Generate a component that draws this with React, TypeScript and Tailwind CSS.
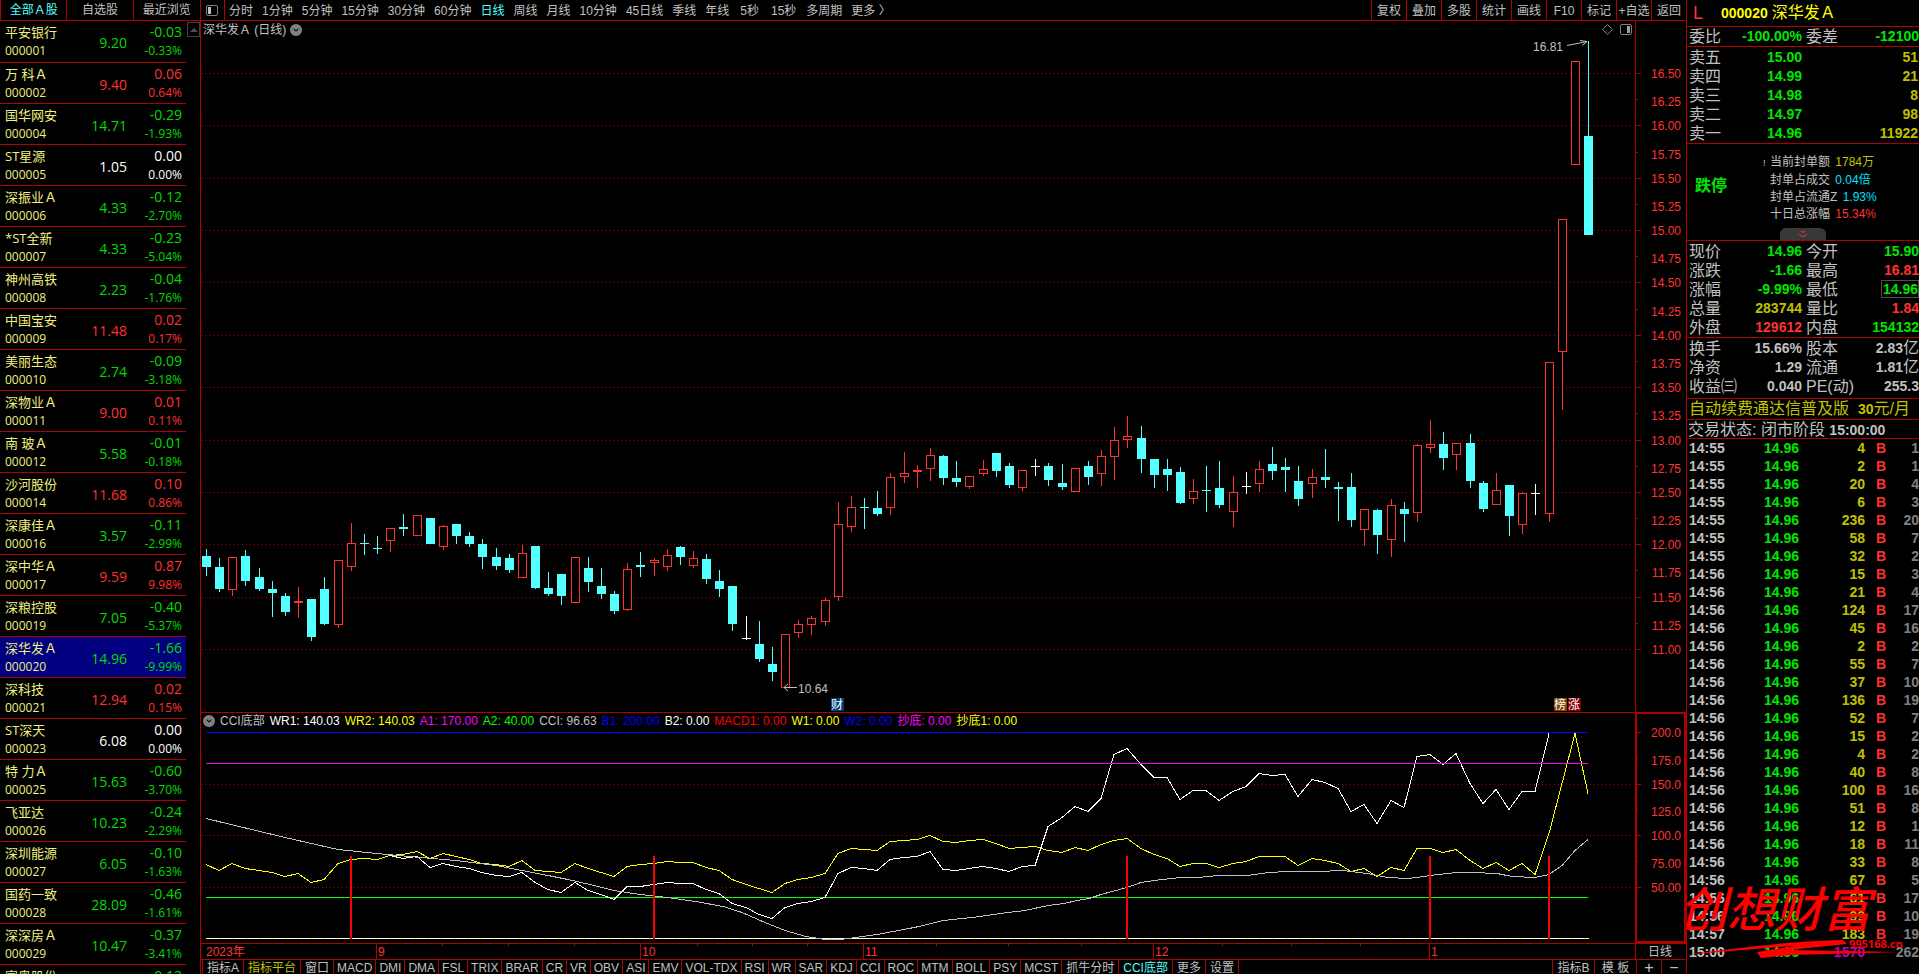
import { FaChevronDown } from 'react-icons/fa'

const stocks: [string, string, string, string, string][] = [
  ['平安银行', '000001', '9.20', '-0.03', '-0.33%'],
  ['万 科Ａ', '000002', '9.40', '0.06', '0.64%'],
  ['国华网安', '000004', '14.71', '-0.29', '-1.93%'],
  ['ST星源', '000005', '1.05', '0.00', '0.00%'],
  ['深振业Ａ', '000006', '4.33', '-0.12', '-2.70%'],
  ['*ST全新', '000007', '4.33', '-0.23', '-5.04%'],
  ['神州高铁', '000008', '2.23', '-0.04', '-1.76%'],
  ['中国宝安', '000009', '11.48', '0.02', '0.17%'],
  ['美丽生态', '000010', '2.74', '-0.09', '-3.18%'],
  ['深物业Ａ', '000011', '9.00', '0.01', '0.11%'],
  ['南 玻Ａ', '000012', '5.58', '-0.01', '-0.18%'],
  ['沙河股份', '000014', '11.68', '0.10', '0.86%'],
  ['深康佳Ａ', '000016', '3.57', '-0.11', '-2.99%'],
  ['深中华Ａ', '000017', '9.59', '0.87', '9.98%'],
  ['深粮控股', '000019', '7.05', '-0.40', '-5.37%'],
  ['深华发Ａ', '000020', '14.96', '-1.66', '-9.99%'],
  ['深科技', '000021', '12.94', '0.02', '0.15%'],
  ['ST深天', '000023', '6.08', '0.00', '0.00%'],
  ['特 力Ａ', '000025', '15.63', '-0.60', '-3.70%'],
  ['飞亚达', '000026', '10.23', '-0.24', '-2.29%'],
  ['深圳能源', '000027', '6.05', '-0.10', '-1.63%'],
  ['国药一致', '000028', '28.09', '-0.46', '-1.61%'],
  ['深深房Ａ', '000029', '10.47', '-0.37', '-3.41%'],
  ['富奥股份', '000030', '5.28', '-0.12', '-2.22%'],
]

const periods = ['分时', '1分钟', '5分钟', '15分钟', '30分钟', '60分钟', '日线', '周线', '月线', '10分钟', '45日线', '季线', '年线', '5秒', '15秒', '多周期', '更多 〉']
const tools = ['复权', '叠加', '多股', '统计', '画线', 'F10', '标记', '+自选', '返回']
const indicators = ['指标A', '指标平台', '窗口', 'MACD', 'DMI', 'DMA', 'FSL', 'TRIX', 'BRAR', 'CR', 'VR', 'OBV', 'ASI', 'EMV', 'VOL-TDX', 'RSI', 'WR', 'SAR', 'KDJ', 'CCI', 'ROC', 'MTM', 'BOLL', 'PSY', 'MCST', '抓牛分时', 'CCI底部', '更多', '设置']

const legend = [
  ['WR1: 140.03', 'text-white'],
  ['WR2: 140.03', 'text-[#ffff00]'],
  ['A1: 170.00', 'text-[#ff00ff]'],
  ['A2: 40.00', 'text-[#00ff00]'],
  ['CCI: 96.63', 'text-[#c0c0c0]'],
  ['B1: 200.00', 'text-[#0000ff]'],
  ['B2: 0.00', 'text-white'],
  ['MACD1: 0.00', 'text-[#ff0000]'],
  ['W1: 0.00', 'text-[#ffff00]'],
  ['W2: 0.00', 'text-[#0000ff]'],
  ['抄底: 0.00', 'text-[#ff00ff]'],
  ['抄底1: 0.00', 'text-[#ffff00]'],
]

// kind, high, body top, body bottom, low
type Candle = [string, number, number, number, number]
const candles: Candle[] = [
  ['d', 549, 556, 567, 576], ['d', 558, 567, 589, 592], ['u', 557, 557, 590, 596], ['d', 550, 556, 581, 586],
  ['d', 568, 577, 589, 591], ['d', 581, 589, 593, 617], ['d', 593, 596, 612, 616], ['u', 587, 601, 603, 618],
  ['d', 599, 599, 637, 641], ['d', 577, 589, 624, 625], ['u', 560, 560, 625, 628], ['u', 523, 543, 567, 571],
  ['d', 534, 543, 544, 555], ['d', 536, 548, 549, 554], ['u', 528, 528, 541, 552], ['d', 514, 527, 529, 536],
  ['u', 515, 515, 536, 536], ['d', 518, 518, 544, 544], ['u', 525, 526, 547, 550], ['d', 524, 524, 536, 544],
  ['d', 532, 536, 544, 547], ['d', 539, 544, 557, 569], ['d', 548, 557, 566, 570], ['d', 554, 558, 570, 573],
  ['u', 545, 553, 578, 578], ['d', 546, 546, 588, 589], ['d', 572, 588, 594, 596], ['d', 574, 574, 596, 605],
  ['u', 557, 557, 603, 603], ['d', 557, 568, 582, 592], ['d', 568, 586, 594, 599], ['d', 591, 594, 611, 614],
  ['u', 563, 569, 610, 611], ['d', 552, 565, 567, 577], ['u', 558, 560, 563, 576], ['u', 549, 555, 567, 571],
  ['d', 546, 547, 557, 565], ['u', 551, 558, 566, 568], ['d', 554, 559, 579, 584], ['d', 570, 581, 589, 597],
  ['d', 586, 586, 624, 631], ['x', 616, 638, 639, 640], ['d', 621, 644, 659, 662], ['d', 647, 664, 672, 681],
  ['u', 634, 634, 688, 688], ['u', 620, 624, 633, 638], ['u', 616, 618, 625, 635], ['u', 598, 600, 622, 626],
  ['u', 502, 524, 597, 601], ['u', 496, 507, 527, 532], ['d', 498, 507, 508, 529], ['d', 491, 508, 514, 516],
  ['u', 473, 477, 508, 515], ['u', 452, 473, 477, 483], ['u', 465, 470, 472, 488], ['u', 448, 455, 469, 481],
  ['d', 455, 456, 478, 485], ['d', 461, 478, 482, 487], ['u', 476, 476, 487, 489], ['u', 460, 469, 474, 476],
  ['d', 453, 453, 471, 477], ['d', 463, 466, 485, 488], ['u', 470, 470, 488, 491], ['x', 459, 466, 467, 476],
  ['d', 463, 466, 480, 486], ['d', 464, 483, 487, 490], ['u', 468, 468, 492, 492], ['d', 461, 466, 477, 485],
  ['u', 450, 456, 474, 486], ['u', 427, 440, 457, 480], ['u', 416, 436, 440, 448], ['d', 426, 438, 459, 473],
  ['d', 459, 459, 475, 488], ['d', 459, 469, 475, 491], ['d', 467, 472, 503, 504], ['u', 479, 491, 499, 504],
  ['d', 466, 490, 491, 512], ['d', 461, 488, 505, 508], ['u', 476, 492, 512, 527], ['x', 472, 486, 487, 494],
  ['u', 461, 469, 484, 492], ['d', 447, 464, 471, 480], ['d', 458, 467, 470, 492], ['d', 466, 481, 499, 506],
  ['u', 469, 477, 484, 498], ['d', 449, 477, 480, 488], ['d', 482, 487, 489, 521], ['d', 473, 487, 520, 527],
  ['u', 509, 509, 530, 546], ['d', 509, 510, 535, 554], ['u', 499, 505, 540, 557], ['d', 502, 509, 514, 542],
  ['u', 444, 445, 513, 522], ['u', 420, 444, 448, 453], ['d', 432, 444, 458, 470], ['u', 443, 443, 455, 470],
  ['d', 434, 443, 481, 488], ['d', 481, 483, 509, 512], ['u', 473, 490, 505, 505], ['d', 485, 485, 516, 536],
  ['u', 492, 493, 525, 534], ['x', 484, 493, 494, 515], ['u', 362, 362, 514, 522], ['u', 219, 219, 352, 410],
  ['u', 61, 61, 165, 165], ['d', 41, 136, 235, 235],
]

const wr2 = [
  864, 870, 863, 868, 870, 872, 876, 873, 882, 879, 863, 859, 858, 859, 855, 854, 851, 858, 853, 856,
  859, 863, 864, 866, 860, 870, 871, 872, 863, 868, 872, 876, 866, 864, 863, 861, 862, 862, 867, 870,
  879, 884, 888, 892, 883, 879, 877, 873, 853, 848, 849, 850, 841, 840, 839, 835, 841, 842, 840, 839,
  843, 848, 847, 846, 850, 852, 847, 850, 844, 840, 838, 848, 854, 858, 866, 863, 863, 867, 863, 861,
  856, 856, 856, 865, 858, 860, 863, 871, 868, 876, 867, 870, 848, 848, 852, 849, 860, 868, 862, 870,
  863, 874, 833, 783, 733, 793,
]

// starts at the 15th bar
const wr1 = [
  855, 858, 856, 867, 863, 866, 868, 872, 875, 876, 872, 882, 889, 892, 882, 890, 894, 899, 886, 886,
  884, 882, 883, 883, 889, 893, 903, 907, 914, 918, 907, 903, 901, 897, 873, 867, 868, 870, 859, 857,
  856, 851, 869, 870, 868, 866, 868, 871, 866, 865, 826, 817, 806, 811, 798, 754, 748, 764, 777, 777,
  799, 790, 790, 800, 791, 786, 773, 775, 774, 796, 779, 782, 788, 811, 804, 823, 800, 807, 756, 754,
  764, 753, 783, 803, 789, 809, 791, 791, 733,
]

const cci = [
  [0, 818], [6, 837], [10, 849], [13, 853], [15.4, 856], [19, 860], [22, 865], [24, 870], [26, 875], [27.5, 879],
  [29.2, 884], [31, 890], [33, 894], [35, 897], [37.2, 901], [39.3, 906], [40.7, 912], [42.5, 922], [44, 930], [45.6, 936],
  [47, 939], [48.2, 939], [49.4, 937], [51, 934], [53, 929], [54.2, 926], [56, 920], [58.2, 917], [60.9, 912], [62.2, 910],
  [64, 905], [65.2, 903], [66.2, 900], [67.1, 898], [68, 894], [70, 887], [71, 882], [72, 880], [74, 877], [75.4, 877],
  [76.9, 875], [79.2, 875], [80.7, 872], [82.2, 871], [84.5, 871], [86.4, 870], [88.2, 873], [89.8, 877], [91.3, 878], [92, 877],
  [93, 875], [95, 872], [96.2, 872], [98.1, 873], [99.2, 876], [101, 877], [102, 874], [103, 865], [104, 850], [105, 839],
]

const ticks: [string, string, string][] = [
  ['14:55', '4', '1'], ['14:55', '2', '1'], ['14:55', '20', '4'], ['14:55', '6', '3'], ['14:55', '236', '20'],
  ['14:55', '58', '7'], ['14:55', '32', '2'], ['14:56', '15', '3'], ['14:56', '21', '4'], ['14:56', '124', '17'],
  ['14:56', '45', '16'], ['14:56', '2', '2'], ['14:56', '55', '7'], ['14:56', '37', '10'], ['14:56', '136', '19'],
  ['14:56', '52', '7'], ['14:56', '15', '2'], ['14:56', '4', '2'], ['14:56', '40', '8'], ['14:56', '100', '16'],
  ['14:56', '51', '8'], ['14:56', '12', '1'], ['14:56', '18', '11'], ['14:56', '33', '8'], ['14:56', '67', '5'],
  ['14:56', '61', '17'], ['14:56', '99', '10'], ['14:57', '183', '19'], ['15:00', '1570', '262'],
]

const asks = [['卖五', '15.00', '51'], ['卖四', '14.99', '21'], ['卖三', '14.98', '8'], ['卖二', '14.97', '98'], ['卖一', '14.96', '11922']]

const G = 'text-[#00e600]'
const R = 'text-[#ff3232]'
const Y = 'text-[#c0c000]'
const W = 'text-[#c0c0c0]'

const quotes = [
  ['现价', '14.96', G, '今开', '15.90', G],
  ['涨跌', '-1.66', G, '最高', '16.81', R],
  ['涨幅', '-9.99%', G, '最低', '14.96', G],
  ['总量', '283744', Y, '量比', '1.84', R],
  ['外盘', '129612', R, '内盘', '154132', G],
]
const finance = [
  ['换手', '15.66%', W, '股本', '2.83亿', W],
  ['净资', '1.29', W, '流通', '1.81亿', W],
  ['收益㈢', '0.040', W, 'PE(动)', '255.3', W],
]

const barX = (i: number) => Math.round(206 + i * 13.162)
const priceY = (p: number) => Math.round(73 + (16.5 - p) * 104.73)
const cciY = (v: number) => Math.round(938 - v * 1.03)

function tone(v: string) {
  if (v.startsWith('-')) return 'text-[#00dc00]'
  return parseFloat(v) === 0 ? 'text-white' : 'text-[#ff3030]'
}

function PriceChart() {
  const labels = Array.from({ length: 23 }, (_, i) => 16.5 - i * 0.25)
  return (
    <svg viewBox="201 39 1485 673" className="block w-full flex-1 min-h-0" role="img" aria-label="日线">
      <g shapeRendering="crispEdges">
        {labels.filter(p => p % 0.5 === 0).map(p => (
          <line key={p} x1="202" x2="1632" y1={priceY(p) + 0.5} y2={priceY(p) + 0.5} stroke="#b00000" strokeDasharray="1 3" />
        ))}
        <line x1="1635.5" x2="1635.5" y1="39" y2="712" stroke="#b00000" />
        {labels.map(p => (
          <line key={p} x1="1636" x2={p % 0.5 === 0 ? 1641 : 1638} y1={priceY(p) + 0.5} y2={priceY(p) + 0.5} stroke="#b00000" />
        ))}
        {candles.map(([kind, high, top, bottom, low], i) => {
          const x = barX(i)
          const color = kind === 'd' ? '#54ffff' : kind === 'u' ? '#ff3232' : '#ffffff'
          return (
            <g key={i}>
              <rect x={x} y={high} width="1" height={low - high} fill={color} />
              {kind === 'u'
                ? <rect x={x - 3.5} y={top + 0.5} width="8" height={Math.max(bottom - top - 1, 1)} fill="#000" stroke={color} />
                : <rect x={x - 4} y={top} width="9" height={bottom - top} fill={color} />}
            </g>
          )
        })}
      </g>
      <g fontSize="12" fontFamily="Liberation Sans, sans-serif">
        {labels.map(p => (
          <text key={p} x="1681" y={priceY(p) + (p % 0.5 === 0 ? 5 : 7)} textAnchor="end" fill="#ff3232">{p.toFixed(2)}</text>
        ))}
        <text x="1563" y="51" textAnchor="end" fill="#c0c0c0">16.81</text>
        <text x="798" y="693" fill="#c0c0c0">10.64</text>
      </g>
      <g stroke="#c0c0c0" fill="none">
        <path d="M1567 45.5 L1587 41.5 M1580 40.5 L1587 41.5 L1582 45.5" />
        <path d="M784 687.5 H797 M788 684 L784 687.5 L788 691" />
      </g>
      <g fontSize="12" fill="#fff" fontFamily="Noto Sans CJK SC, sans-serif">
        <rect x="831" y="698" width="13" height="13" fill="#003c78" />
        <text x="831" y="709">财</text>
        <rect x="1554" y="698" width="13" height="13" fill="#804000" />
        <text x="1554" y="709">榜</text>
        <rect x="1568" y="698" width="13" height="13" fill="#800000" />
        <text x="1568" y="709">涨</text>
      </g>
    </svg>
  )
}

function CciChart() {
  const labels = [200, 175, 150, 125, 100, 75, 50]
  return (
    <svg viewBox="201 728 1485 215" className="block w-full shrink-0" role="img" aria-label="CCI底部">
      <g shapeRendering="crispEdges" fill="none">
        {[150, 100, 50].map(v => (
          <line key={v} x1="202" x2="1632" y1={cciY(v) + 0.5} y2={cciY(v) + 0.5} stroke="#b00000" strokeDasharray="1 3" />
        ))}
        {labels.map(v => (
          <line key={v} x1="1636" x2={v % 50 === 0 ? 1641 : 1638} y1={cciY(v) + 0.5} y2={cciY(v) + 0.5} stroke="#b00000" />
        ))}
        <path d="M1636 728 V942 H1685 V728" stroke="#b00000" strokeWidth="2" />
        <path d="M206 938.5 H1589" stroke="#fff" />
        <path d="M206 938.5 H1589" stroke="#ffff00" strokeDasharray="3 10" />
        <path d="M206 897.5 H1588" stroke="#00ff00" />
        <polyline points={wr2.map((y, i) => `${barX(i)},${y}.5`).join(' ')} stroke="#ffff00" />
        <polyline points={wr1.map((y, i) => `${barX(i + 14)},${y}.5`).join(' ')} stroke="#fff" />
        <polyline points={cci.map(([i, y]) => `${barX(i)},${y}.5`).join(' ')} stroke="#c0c0c0" />
        <path d="M206 763.5 H1588" stroke="#ff00ff" />
        <path d="M206 732.5 H1588" stroke="#0000ff" />
        {[11, 34, 70, 93, 102].map(i => (
          <rect key={i} x={barX(i) - 1} y="856" width="2" height="83" fill="#ff0000" />
        ))}
      </g>
      <g fontSize="12" fill="#ff3232" textAnchor="end" fontFamily="Liberation Sans, sans-serif">
        {labels.map(v => (
          <text key={v} x="1681" y={cciY(v) + (v % 50 === 0 ? 5 : 7)}>{v < 100 ? v.toFixed(2) : v.toFixed(1)}</text>
        ))}
      </g>
    </svg>
  )
}

function TimeAxis() {
  const months: [number, string][] = [[376, '9'], [640, '10'], [863, '11'], [1153, '12'], [1429, '1']]
  return (
    <svg viewBox="201 944 1485 15" className="block w-full shrink-0" role="img" aria-label="时间轴">
      <g stroke="#b00000" shapeRendering="crispEdges">
        {months.map(([x]) => <line key={x} x1={x + 0.5} x2={x + 0.5} y1="944" y2="959" />)}
        {[442, 508, 574, 697, 752, 807, 936, 1008, 1081, 1222, 1291, 1360].map(x => (
          <line key={x} x1={x + 0.5} x2={x + 0.5} y1="944" y2="946" />
        ))}
        <line x1="1635.5" x2="1635.5" y1="944" y2="959" />
      </g>
      <g fontSize="12" fill="#ff3232" fontFamily="Liberation Sans, Noto Sans CJK SC, sans-serif">
        <text x="206" y="956">2023年</text>
        {months.map(([x, m]) => <text key={x} x={x + 2} y="956">{m}</text>)}
        <text x="1648" y="956" fill="#c0c0c0">日线</text>
      </g>
    </svg>
  )
}

function Chevron() {
  return (
    <span className="flex size-3 items-center justify-center rounded-full bg-[#808080] text-black">
      <FaChevronDown size={6} />
    </span>
  )
}

function QuoteTable({ rows }: { rows: string[][] }) {
  return (
    <table className="w-full table-fixed border-collapse">
      <tbody>
        {rows.map(([a, av, ac, b, bv, bc]) => (
          <tr key={a} className="h-[19px] leading-[19px]">
            <th className="w-[48px] p-0 pl-0.5 text-left font-normal whitespace-nowrap">{a}</th>
            <td className={`w-[67px] p-0 text-right text-sm leading-[19px] font-bold ${ac}`}>{av}</td>
            <th className="w-[48px] p-0 pl-1 text-left font-normal whitespace-nowrap">{b}</th>
            <td className={`p-0 text-right text-sm leading-[19px] font-bold ${bc}`}>
              {b === '最低'
                ? <span className="inline-block h-[18px] border border-[#505050] pl-px leading-4">{bv}</span>
                : bv.replace('亿', '')}
              {bv.endsWith('亿') && <span className="text-base leading-none font-normal">亿</span>}
            </td>
          </tr>
        ))}
      </tbody>
    </table>
  )
}

function Watermark() {
  return (
    <div className="absolute -left-2 bottom-3 w-[224px] text-[#ff0000]">
      <div className="font-['Noto_Sans_CJK_SC',sans-serif] text-5xl leading-[64px] font-medium italic">创想财富</div>
      <svg viewBox="0 0 224 24" className="block w-full">
        <path d="M3 17 C60 10 110 3 164 2 L168 6 L110 12 L222 14 L112 17 L82 20 L78 14 L116 8 C80 10 40 14 3 17Z" fill="#ff0000" />
        <text x="170" y="10" fontSize="11" fontWeight="700" fontFamily="Open Sans, sans-serif" fill="#ff0000">995168.cn</text>
      </svg>
    </div>
  )
}

export default function App() {
  return (
    <main className="grid h-screen grid-cols-[201px_minmax(0,1fr)_233px] overflow-hidden bg-black font-['Liberation_Sans','Noto_Sans_CJK_SC',sans-serif] text-xs text-[#c0c0c0]">
      <aside className="min-h-0 overflow-hidden border-r border-[#b00000]">
        <nav className="grid h-[21px] grid-cols-3 border-b border-l border-[#b00000] leading-5">
          <button className="border-r border-[#b00000] text-[#54ffff]">全部Ａ股</button>
          <button className="border-r border-[#b00000]">自选股</button>
          <button>最近浏览</button>
        </nav>
        <div className="flex items-start">
          <table className="w-[186px] table-fixed border-collapse font-['Open_Sans','Noto_Sans_CJK_SC',sans-serif]">
            <tbody>
              {stocks.map(([name, code, price, diff, pct]) => (
                <tr key={code} className={code === '000020' ? 'bg-[#000080]' : ''}>
                  <td className="h-[41px] border-b border-[#b00000] p-0 pl-[5px] text-[#f0f080]">
                    <div className="pb-0.5 text-[13px] leading-[18px] whitespace-nowrap">{name}</div>
                    <div className="leading-4">{code}</div>
                  </td>
                  <td className={`w-[60px] border-b border-[#b00000] p-0 pt-1 text-right text-sm ${tone(diff)}`}>{price}</td>
                  <td className={`w-[59px] border-b border-[#b00000] p-0 pr-1 text-right ${tone(diff)}`}>
                    <div className="pb-0.5 text-sm leading-[18px]">{diff}</div>
                    <div className="leading-4">{pct}</div>
                  </td>
                </tr>
              ))}
            </tbody>
          </table>
          <button aria-label="向上" className="mt-px ml-px flex h-[15px] w-[13px] items-center justify-center border border-[#404040] text-[#505050]">
            <svg viewBox="0 0 8 4" className="w-2"><path d="M0 4 L4 0 L8 4Z" fill="currentColor" /></svg>
          </button>
        </div>
      </aside>

      <section className="flex min-h-0 min-w-0 flex-col">
        <header className="flex h-[21px] shrink-0 justify-between border-b border-[#b00000] leading-4">
          <div className="flex">
            <button aria-label="侧栏" className="flex w-6 items-center justify-center border-r border-[#b00000] pr-0.5">
              <svg viewBox="0 0 12 11" className="w-3" fill="none" stroke="#808080">
                <rect x="0.5" y="0.5" width="11" height="10" rx="1.5" />
                <rect x="2" y="2" width="3" height="7" fill="#c0c0c0" stroke="none" />
              </svg>
            </button>
            {periods.map(p => (
              <button key={p} className={`pt-0.5 whitespace-nowrap ${p.endsWith('秒') ? 'px-1.5' : 'pr-[5px] pl-1'} ${p === '日线' ? 'text-[#54ffff]' : ''}`}>{p}</button>
            ))}
          </div>
          <div className="flex">
            {tools.map(t => (
              <button key={t} className="w-[35px] border-l border-[#b00000] pt-0.5 whitespace-nowrap">{t}</button>
            ))}
          </div>
        </header>

        <div className="flex h-[18px] shrink-0 items-center">
          <div className="flex flex-1 items-center gap-1 pl-0.5 leading-[18px]">
            深华发Ａ (日线) <Chevron />
          </div>
          <svg viewBox="0 0 32 12" className="mr-px h-3 w-8" fill="none" stroke="#808080">
            <path d="M5.5 0.5 L10.5 5.5 L5.5 10.5 L0.5 5.5Z" />
            <rect x="18.5" y="0.5" width="11" height="10" rx="1.5" />
            <rect x="25" y="2" width="3" height="7" fill="#a0a0a0" stroke="none" />
          </svg>
          <div className="h-full w-[51px] border-l border-[#b00000]" />
        </div>
        <PriceChart />
        <div className="flex h-4 shrink-0 border-t border-[#b00000] leading-[15px]">
          <div className="flex flex-1 items-center gap-[5px] pt-px pl-0.5 whitespace-nowrap">
            <Chevron />
            <span>CCI底部</span>
            {legend.map(([text, color]) => <span key={text} className={color}>{text}</span>)}
          </div>
          <div className="w-[51px] border-2 border-b-0 border-t-1 border-[#b00000]" />
        </div>
        <CciChart />
        <div className="shrink-0 border-y border-[#b00000]"><TimeAxis /></div>
        <footer className="flex h-[14px] shrink-0 justify-between overflow-hidden pl-px leading-4">
          <div className="flex">
            {indicators.map(t => (
              <button key={t} className={`h-4 border-l border-[#b00000] whitespace-nowrap last:border-r ${/^[A-Z-]+$/.test(t) ? 'px-[3px]' : 'px-1'} ${t === '指标平台' ? 'text-[#c0c000]' : t === 'CCI底部' ? 'text-[#54ffff]' : ''}`}>{t}</button>
            ))}
          </div>
          <div className="flex">
            <button className="h-4 w-[42px] border-l border-[#b00000]">指标B</button>
            <button className="h-4 w-[42px] border-l border-[#b00000]">模 板</button>
            <button className="h-4 w-[25px] border-l border-[#b00000] text-base leading-4">+</button>
            <button className="h-4 w-[25px] border-l border-[#b00000] text-base leading-4">−</button>
          </div>
        </footer>
      </section>

      <aside className="relative min-h-0 overflow-hidden border-l border-[#b00000] text-base">
        <h1 className="flex h-[27px] items-center border-b border-[#b00000] pl-1.5 text-[#ffff00]">
          <span className="w-7 text-lg text-[#ff3232]">L</span>
          <b className="text-sm">000020</b><span className="pl-1">深华发Ａ</span>
        </h1>
        <div className="border-b border-[#b00000]">
          <QuoteTable rows={[['委比', '-100.00%', G, '委差', '-12100', G]]} />
        </div>
        <div className="pt-px">
          <table className="w-full table-fixed border-collapse">
            <tbody>
              {asks.map(([label, price, vol]) => (
                <tr key={label} className="h-[19px] leading-[19px]">
                  <th className="w-[48px] p-0 pl-0.5 text-left font-normal">{label}</th>
                  <td className="w-[67px] p-0 text-right text-sm leading-[19px] font-bold text-[#00e600]">{price}</td>
                  <td className="p-0 pr-px text-right text-sm leading-[19px] font-bold text-[#c0c000]">{vol}</td>
                </tr>
              ))}
            </tbody>
          </table>
        </div>
        <div className="relative flex h-[98px] items-center border-y border-[#b00000] pb-2">
          <b className="w-[76px] pb-1 pl-2 text-base text-[#00e600]">跌停</b>
          <ul className="text-xs leading-[17px]">
            <li><span className="inline-block w-[7px] text-[9px]">!</span>当前封单额 <span className="pl-0.5 text-[#c0c000]">1784万</span></li>
            <li className="pl-[7px]">封单占成交 <span className="pl-0.5 text-[#00e0ff]">0.04倍</span></li>
            <li className="pl-[7px]">封单占流通Z <span className="pl-0.5 text-[#00e0ff]">1.93%</span></li>
            <li className="pl-[7px]">十日总涨幅 <span className="pl-0.5 text-[#ff3232]">15.34%</span></li>
          </ul>
          <button aria-label="展开" className="absolute bottom-0 left-[93px] flex h-3 w-[46px] items-center justify-center rounded-t-md bg-[#383838]">
            <svg viewBox="0 0 10 8" className="w-2.5" fill="none" stroke="#ff3232"><path d="M3 1 L5 2.5 L7 1 M1 4 L5 7 L9 4" /></svg>
          </button>
        </div>
        <div className="pt-px"><QuoteTable rows={quotes} /></div>
        <div className="border-y border-[#b00000] pt-px pb-0.5"><QuoteTable rows={finance} /></div>
        <a href="#" className="block h-[21px] border-b border-[#b00000] pl-0.5 leading-5 whitespace-nowrap text-[#c0c000]">自动续费通达信普及版&nbsp; <b className="text-sm">30</b>元/月</a>
        <div className="h-[19px] border-b border-[#b00000] pl-px leading-[18px] whitespace-nowrap">交易状态: 闭市阶段 <b className="text-sm">15:00:00</b></div>
        <table className="w-full table-fixed border-collapse text-sm font-bold">
          <tbody>
            {ticks.map(([time, vol, n], i) => (
              <tr key={i} className="h-[18px] leading-[18px]">
                <td className="w-[48px] p-0 pl-0.5">{time}</td>
                <td className="w-[64px] p-0 text-right text-[#00e600]">14.96</td>
                <td className={`w-[66px] p-0 text-right ${vol === '1570' ? 'text-[#c000c0]' : 'text-[#c0c000]'}`}>{vol}</td>
                <td className="w-[21px] p-0 text-right text-[#ff3232]">{vol === '1570' ? '' : 'B'}</td>
                <td className="p-0 text-right text-[#808080]">{n}</td>
              </tr>
            ))}
          </tbody>
        </table>
        <Watermark />
      </aside>
    </main>
  )
}
